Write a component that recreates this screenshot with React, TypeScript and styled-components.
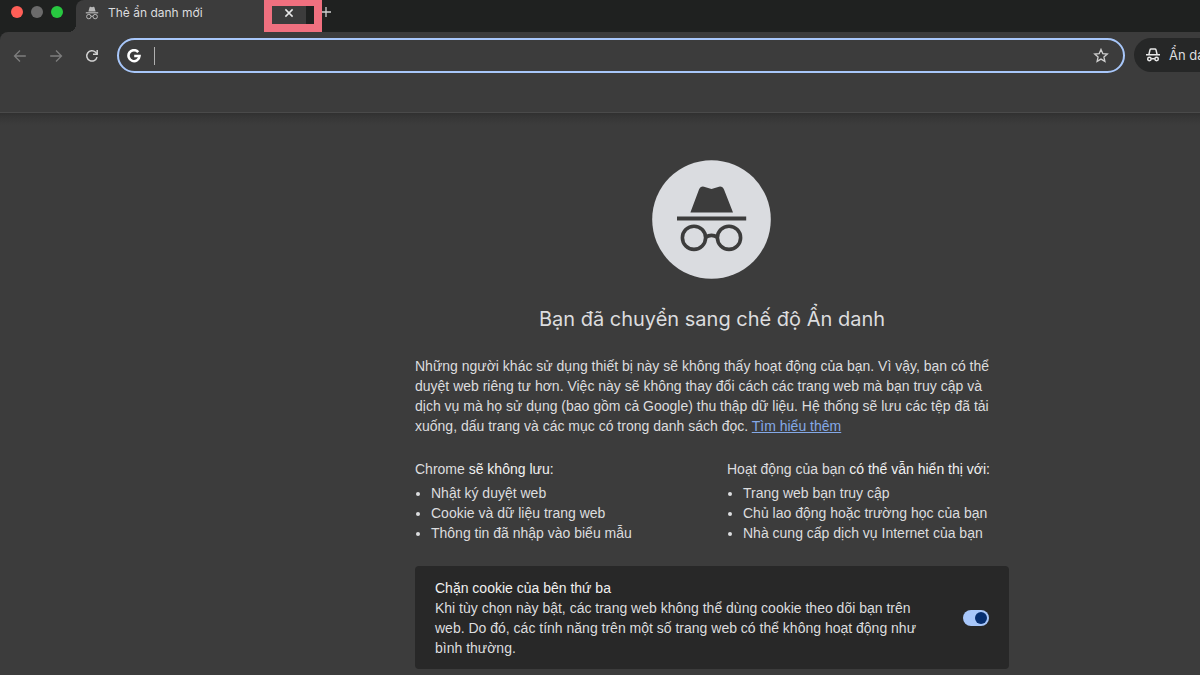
import React, { useState } from "react";
import styled, { createGlobalStyle } from "styled-components";

const GlobalStyle = createGlobalStyle`
  *, *::before, *::after { box-sizing: border-box; }
  html, body, #root { height: 100%; }
  body {
    margin: 0;
    overflow: hidden;
    background: #3c3c3c;
    color: #dcdddf;
    font-family: "Liberation Sans", Arial, sans-serif;
    font-size: 14px;
    line-height: 20px;
  }
  button { font: inherit; color: inherit; background: none; border: 0; padding: 0; cursor: pointer; }
  svg { display: block; flex: none; }
`;

const Browser = styled.div`
  min-height: 100%;
  display: flex;
  flex-direction: column;
  overflow: hidden;
  background: #1f2120;
  font-family: Inter, sans-serif;
`;

const TabStrip = styled.header`
  display: flex;
  height: 32px;
`;

const WindowControls = styled.div`
  display: flex;
  gap: 8px;
  width: 76px;
  padding: 6px 0 0 11px;
`;

const Light = styled.button<{ $color: string }>`
  && { background: ${(p) => p.$color}; }
  width: 12px;
  height: 12px;
  border-radius: 50%;
`;

const Tab = styled.div`
  position: relative;
  display: flex;
  width: 230px;
  padding: 0 12px 6px 9px;
  align-items: center;
  gap: 9px;
  background: #3c3c3c;
  border-top-left-radius: 8px;
  font-size: 12px;
  line-height: 16px;
  &::before {
    content: "";
    position: absolute;
    left: -8px;
    bottom: 0;
    width: 8px;
    height: 8px;
    background: radial-gradient(circle at 0 0, transparent 8px, #3c3c3c 8px);
  }
`;

const TabTitle = styled.span`
  flex: 1;
  white-space: nowrap;
`;

const CloseFrame = styled.div`
  position: absolute;
  top: 0;
  left: 188px;
  width: 58px;
  height: 32px;
  border: solid #f0707f;
  border-width: 6px 8px 8px;
  background: linear-gradient(to right, #3c3c3c 34px, #1f2120 34px);
`;

const CloseButton = styled.button`
  display: flex;
  align-items: center;
  justify-content: center;
  width: 34px;
  height: 14px;
`;

const NewTabButton = styled.button`
  display: flex;
  && { padding: 6px 0 0 14px; }
`;

const Toolbar = styled.nav`
  display: flex;
  align-items: flex-start;
  height: 81px;
  padding: 6px 0 0 12px;
  background: #3c3c3c;
  border-top-left-radius: 8px;
  box-shadow: inset 0 -1px #4a4a4a;
`;

const NavButtons = styled.div`
  display: flex;
  align-items: center;
  gap: 20px;
  height: 35px;
  width: 105px;
`;

const NavButton = styled.button<{ $dim?: boolean }>`
  && { color: ${(p) => (p.$dim ? "#7d7d7d" : "#d2d2d2")}; }
`;

const AddressBar = styled.div`
  display: flex;
  flex: 1;
  align-items: center;
  height: 35px;
  padding: 0 14px 0 8px;
  border: 2px solid #a8c7fa;
  border-radius: 18px;
`;

const AddressInput = styled.input`
  flex: 1;
  min-width: 0;
  height: 18px;
  margin-left: 13px;
  padding: 0 6px;
  border: 0;
  border-left: 1px solid #b0b0b0;
  outline: 0;
  background: none;
  color: #e3e3e3;
  font: inherit;
`;

const IncognitoChip = styled.button`
  display: flex;
  align-items: center;
  gap: 8px;
  width: 66px;
  height: 34px;
  margin-left: 9px;
  overflow: hidden;
  white-space: nowrap;
  && {
    padding-left: 11px;
    background: #262727;
    font-size: 13px;
  }
  border-radius: 17px 0 0 17px;
`;

const Page = styled.main`
  display: grid;
  grid-template-columns: 415fr minmax(0, 594px) 191fr;
  flex: 1;
  background: linear-gradient(#303030, #363636 4px, #3c3c3c 12px);
  font-family: "Liberation Sans", Arial, sans-serif;
`;

const Content = styled.div`
  grid-column: 2;
  display: flex;
  flex-direction: column;
  padding-top: 47px;
`;

const Hero = styled.div`
  align-self: center;
`;

const Title = styled.h1`
  margin: 23px 0 21px;
  text-align: center;
  font-family: Inter, sans-serif;
  font-size: 20px;
  line-height: 32px;
  font-weight: 400;
`;

const Paragraph = styled.p`
  margin: 0;
`;

const Link = styled.a`
  color: #84a9e8;
  text-decoration: underline;
`;

const Columns = styled.div`
  display: grid;
  grid-template-columns: 312px 1fr;
  margin-top: 23px;
`;

const ColumnTitle = styled.h2`
  margin: 0 0 4px;
  font-size: 14px;
  line-height: 20px;
  font-weight: 400;
`;

const Strong = styled.em`
  font-style: normal;
  color: #f1f1f1;
`;

const BulletList = styled.ul`
  margin: 0;
  padding-left: 16px;
`;

const CookieCard = styled.label`
  display: flex;
  align-items: center;
  justify-content: space-between;
  margin-top: 23px;
  padding: 12px 20px 11px;
  background: #282828;
  border-radius: 4px;
`;

const CookieText = styled.span`
  width: 504px;
`;

const CookieTitle = styled.strong`
  display: block;
  font-weight: 400;
  color: #f1f1f1;
`;

const Switch = styled.input`
  appearance: none;
  display: flex;
  align-items: center;
  justify-content: flex-start;
  width: 26px;
  height: 16px;
  margin: 0;
  padding: 0 2px;
  border-radius: 8px;
  background: #8e918f;
  cursor: pointer;
  &::before {
    content: "";
    width: 12px;
    height: 12px;
    border-radius: 50%;
    background: #062e6f;
  }
  &:checked {
    justify-content: flex-end;
    background: #a8c7fa;
  }
`;

const TabIncognitoIcon = () => (
  <svg width="14" height="14" viewBox="0 0 14 14" fill="none" stroke="#b8b8b8">
    <path d="M3.4 5.4 4.5 1.4Q4.7.6 5.5.8L7 1.2 8.5.8Q9.3.6 9.5 1.4L10.6 5.4Z" fill="#b8b8b8" stroke="none" />
    <path d="M.8 6.8H13.2" strokeWidth="1.2" />
    <circle cx="3.8" cy="10.6" r="2.2" />
    <circle cx="10.2" cy="10.6" r="2.2" />
    <path d="M6 10.4Q7 9.8 8 10.4" />
  </svg>
);

const ChipIncognitoIcon = () => (
  <svg width="16" height="16" viewBox="0 0 16 16" fill="none" stroke="#e8e8e8" strokeWidth="1.5">
    <path d="M3.9 7.5 5 2.9Q5.2 2 6.1 2H9.9Q10.8 2 11 2.9L12.1 7.5" />
    <path d="M1 7.8H15" />
    <circle cx="4.4" cy="12" r="1.7" />
    <circle cx="11.6" cy="12" r="1.7" />
    <path d="M6.1 11.8H9.9" />
  </svg>
);

const HeroIcon = () => (
  <svg width="120" height="120" viewBox="0 0 120 120" role="img" aria-label="Ẩn danh">
    <circle cx="59.5" cy="59.5" r="59.3" fill="#dadce0" />
    <path d="M38.4 52.6 47 29.6Q48.4 26 52 26.7L59.5 29 67 26.7Q70.6 26 72 29.6L81 52.6Z" fill="#3c3c3c" />
    <path d="M25 58.6H94.2" stroke="#3c3c3c" strokeWidth="4" />
    <g fill="none" stroke="#3c3c3c" strokeWidth="3.6">
      <circle cx="42" cy="77.8" r="11.6" />
      <circle cx="77" cy="77.8" r="11.6" />
      <path d="M53.4 77.4Q59.5 73.2 65.6 77.4" />
    </g>
  </svg>
);

const ArrowIcon = ({ right }: { right?: boolean }) => (
  <svg width="16" height="16" viewBox="0 0 16 16" fill="none" stroke="currentColor" strokeWidth="1.3">
    <path d={right ? "M2.2 8H13.2M8 2.5 13.5 8 8 13.5" : "M13.8 8H2.8M8 2.5 2.5 8 8 13.5"} />
  </svg>
);

const ReloadIcon = () => (
  <svg width="16" height="16" viewBox="0 0 16 16" fill="none" stroke="currentColor" strokeWidth="1.5">
    <path d="M13 9.1A5.2 5.2 0 1 1 11.6 4.2L13.2 5.9" />
    <path d="M13.2 2V6.2H9" />
  </svg>
);

const GoogleIcon = () => (
  <svg width="14" height="14" viewBox="0 0 14 14" fill="none" stroke="#fff" strokeWidth="2.6">
    <path d="M11.2 3.1A5.5 5.5 0 1 0 12.5 7H7.2" />
  </svg>
);

const StarIcon = () => (
  <svg width="16" height="16" viewBox="0 0 16 16" fill="none" stroke="#cfcfcf" strokeWidth="1.3">
    <path d="M8 1.4 9.8 5.6 14.3 6 10.9 9 11.9 13.4 8 11.1 4.1 13.4 5.1 9 1.7 6 6.2 5.6Z" />
  </svg>
);

const notSaved = ["Nhật ký duyệt web", "Cookie và dữ liệu trang web", "Thông tin đã nhập vào biểu mẫu"];
const visibleTo = ["Trang web bạn truy cập", "Chủ lao động hoặc trường học của bạn", "Nhà cung cấp dịch vụ Internet của bạn"];

const Bullets = ({ items }: { items: string[] }) => (
  <BulletList>
    {items.map((item) => (
      <li key={item}>{item}</li>
    ))}
  </BulletList>
);

export default function App() {
  const [blocked, setBlocked] = useState(true);
  return (
    <Browser>
      <GlobalStyle />
      <TabStrip>
        <WindowControls>
          <Light $color="#ff5f57" aria-label="Đóng cửa sổ" />
          <Light $color="#6b6b6b" aria-label="Thu nhỏ" />
          <Light $color="#28c840" aria-label="Phóng to" />
        </WindowControls>
        <Tab>
          <TabIncognitoIcon />
          <TabTitle>Thẻ ẩn danh mới</TabTitle>
          <CloseFrame>
            <CloseButton aria-label="Đóng thẻ">
              <svg width="10" height="10" viewBox="0 0 10 10" stroke="#e8e8e8" strokeWidth="1.5">
                <path d="M1.4 1.4 8.6 8.6M8.6 1.4 1.4 8.6" />
              </svg>
            </CloseButton>
          </CloseFrame>
        </Tab>
        <NewTabButton aria-label="Thẻ mới">
          <svg width="12" height="12" viewBox="0 0 12 12" stroke="#cfcfcf" strokeWidth="1.3">
            <path d="M6 1V11M1 6H11" />
          </svg>
        </NewTabButton>
      </TabStrip>
      <Toolbar>
        <NavButtons>
          <NavButton $dim aria-label="Quay lại"><ArrowIcon /></NavButton>
          <NavButton $dim aria-label="Tiến"><ArrowIcon right /></NavButton>
          <NavButton aria-label="Tải lại"><ReloadIcon /></NavButton>
        </NavButtons>
        <AddressBar>
          <GoogleIcon />
          <AddressInput aria-label="Thanh địa chỉ" />
          <NavButton aria-label="Đánh dấu trang"><StarIcon /></NavButton>
        </AddressBar>
        <IncognitoChip>
          <ChipIncognitoIcon />
          Ẩn danh
        </IncognitoChip>
      </Toolbar>
      <Page>
        <Content>
          <Hero><HeroIcon /></Hero>
          <Title>Bạn đã chuyển sang chế độ Ẩn danh</Title>
          <Paragraph>
            Những người khác sử dụng thiết bị này sẽ không thấy hoạt động của bạn. Vì vậy, bạn có thể
            duyệt web riêng tư hơn. Việc này sẽ không thay đổi cách các trang web mà bạn truy cập và
            dịch vụ mà họ sử dụng (bao gồm cả Google) thu thập dữ liệu. Hệ thống sẽ lưu các tệp đã tải
            xuống, dấu trang và các mục có trong danh sách đọc. <Link href="#learn-more">Tìm hiểu thêm</Link>
          </Paragraph>
          <Columns>
            <section>
              <ColumnTitle>Chrome <Strong>sẽ không lưu:</Strong></ColumnTitle>
              <Bullets items={notSaved} />
            </section>
            <section>
              <ColumnTitle>Hoạt động của bạn <Strong>có thể vẫn hiển thị với:</Strong></ColumnTitle>
              <Bullets items={visibleTo} />
            </section>
          </Columns>
          <CookieCard>
            <CookieText>
              <CookieTitle>Chặn cookie của bên thứ ba</CookieTitle>
              Khi tùy chọn này bật, các trang web không thể dùng cookie theo dõi bạn trên web. Do đó, các
              tính năng trên một số trang web có thể không hoạt động như bình thường.
            </CookieText>
            <Switch type="checkbox" checked={blocked} onChange={(e) => setBlocked(e.target.checked)} />
          </CookieCard>
        </Content>
      </Page>
    </Browser>
  );
}
